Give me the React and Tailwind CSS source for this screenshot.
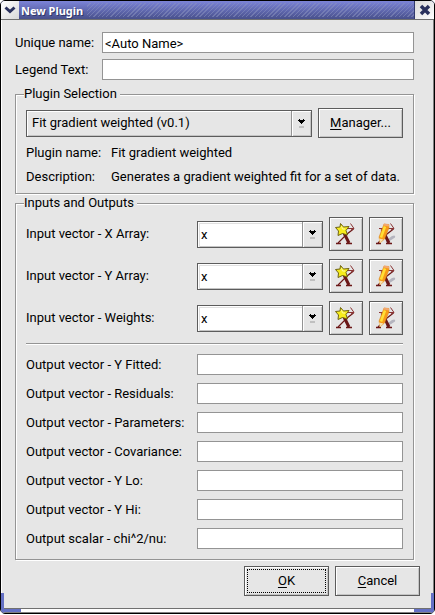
import React from "react";

const outputs = [
  "Output vector - Y Fitted:",
  "Output vector - Residuals:",
  "Output vector - Parameters:",
  "Output vector - Covariance:",
  "Output vector - Y Lo:",
  "Output vector - Y Hi:",
  "Output scalar - chi^2/nu:",
];
const inputs = [
  "Input vector - X Array:",
  "Input vector - Y Array:",
  "Input vector - Weights:",
];

const bevel =
  "border border-[#5c5c5c] bg-[#e6e6e6] shadow-[inset_1px_1px_0_#ffffff,inset_-1px_-1px_0_#c4c4c4]";
const field =
  "h-[21px] min-w-0 flex-1 border border-[#949494] bg-white px-0.5 pt-0.5 outline-none";

function Arrow() {
  return (
    <span className="pointer-events-none absolute inset-y-px right-px flex w-5 items-center justify-center border-l border-[#949494] bg-[#e6e6e6] shadow-[inset_1px_1px_0_#ffffff,inset_-1px_-1px_0_#c4c4c4]">
      <svg width="7" height="9" viewBox="0 0 7 9" shapeRendering="crispEdges">
        <path d="M1 0h1v1h3v-1h1v1h1v1h-1v1h-1v1h-1v1h-1v-1h-1v-1h-1v-1h-1v-1h1z" fill="#000" />
        <path d="M1 7h5v2h-5z" fill="#c0c0c0" />
      </svg>
    </span>
  );
}

function Combo({ id, value, label, editable }) {
  return (
    <div className="relative flex min-w-0 flex-1">
      <select
        id={id}
        aria-label={label}
        className={
          "h-[27px] w-full appearance-none border border-[#5c5c5c] pr-6 outline-none " +
          (editable
            ? "bg-white pt-0.5 pl-[3px] shadow-[inset_1px_1px_0_#ffffff,inset_2px_2px_0_#e0e0e0,inset_-1px_-1px_0_#c4c4c4]"
            : "bg-[#e6e6e6] pl-[5px] shadow-[inset_1px_1px_0_#ffffff,inset_-1px_-1px_0_#c4c4c4]")
        }
      >
        <option>{value}</option>
      </select>
      <Arrow />
    </div>
  );
}

function VectorX() {
  return (
    <g fill="none" stroke="#6b1717">
      <path d="M13 12L20 26" strokeWidth="3" />
      <path d="M24.5 12L18 17L9 26" strokeWidth="1.200" />
      <path d="M10 11.500H25M21.500 6.500L25 11.500L22 13" stroke="#8a3434" />
      <path d="M7 26.500H12M17 26.500H23" strokeWidth="1.300" />
    </g>
  );
}

function NewIcon() {
  return (
    <svg width="32" height="32" viewBox="1 1 32 32" aria-hidden="true">
      <VectorX />
      <path
        d="M11.500 6.500L14.500 10L20 9.500L17 13.500L18.500 18L13.500 16.500L9 18.500L9.500 14L6.500 10.500L11 10Z"
        fill="#f7ec1c"
        stroke="#6f6410"
        strokeLinejoin="round"
      />
      <path d="M12.500 9L13.500 12L16 12" fill="none" stroke="#fffba0" />
    </svg>
  );
}

function EditIcon() {
  return (
    <svg width="32" height="32" viewBox="1 1 32 32" aria-hidden="true">
      <path d="M17 23.500L23 19Q27 17.500 26 20.500Q23 23 17 25.500Z" fill="#b4b4be" />
      <VectorX />
      <path d="M15 7L20 7.500L20 11L15.500 22L11 26L10 20Z" fill="#f79a18" stroke="#d88a20" strokeWidth="0.500" />
      <path d="M16 9.500L12 20.500" stroke="#ffdf35" strokeWidth="2.500" />
      <path d="M15 6.500L20 7.500L20 9.500L14.500 8.500Z" fill="#f3a870" />
      <path d="M10 21.500L14.500 22.500L11 26Z" fill="#f7dfae" />
    </svg>
  );
}

function Group({ title, className, children }) {
  return (
    <fieldset
      className={
        "min-w-0 border border-[#949494] px-2.5 shadow-[inset_1px_1px_0_#ffffff,1px_1px_0_#ffffff] " +
        className
      }
    >
      <legend className="-ml-0.5 h-4 bg-[#e6e6e6] pr-[3px] leading-4">{title}</legend>
      {children}
    </fieldset>
  );
}

export default function App() {
  return (
    <main className="flex min-h-screen flex-col bg-white pb-px font-[Roboto,'Noto_Sans',sans-serif] text-[13px] leading-[18px] text-black">
      <div className="relative flex flex-1 flex-col overflow-hidden rounded-[5px] border border-black bg-[#e6e6e6]">
        <header className="flex h-[19px] border-b border-[#707070] bg-linear-to-b from-[#7c84d8] to-[#48508c]">
          <button aria-label="Window menu" className="flex w-[18px] items-center justify-center bg-linear-to-br from-white to-[#d8d8d8]">
            <svg width="12" height="8" viewBox="0 0 12 8">
              <path d="M1.500 1.500L6 5.500L10.500 1.500" fill="none" stroke="#29305c" strokeWidth="3" />
            </svg>
          </button>
          <h1 className="pr-1 pl-0.5 font-['Noto_Sans',sans-serif] text-[11px] leading-5 font-bold text-white [text-shadow:1px_1px_0_#303868]">New Plugin</h1>
          <div className="my-0.5 flex-1 bg-[repeating-linear-gradient(135deg,transparent_0_2px,#8c94c080_2px_3px)]" />
          <button aria-label="Close" className="flex w-5 items-center justify-center border-l border-[#30386c] bg-linear-to-br from-[#d8d8d8] to-white">
            <svg width="12" height="12" viewBox="0 0 12 12">
              <path d="M2 2L10 10M10 2L2 10" stroke="#29305c" strokeWidth="3.500" />
            </svg>
          </button>
        </header>

        <form className="flex flex-1 flex-col border-r border-l border-r-[#808080] border-l-white pt-3 pr-[19px] pl-[13px]" onSubmit={(e) => e.preventDefault()}>
          <div className="flex items-center">
            <label htmlFor="name" className="w-[87px]">Unique name:</label>
            <input id="name" className={field} defaultValue="<Auto Name>" />
          </div>
          <div className="mt-1.5 flex items-center">
            <label htmlFor="legend" className="w-[87px]">Legend Text:</label>
            <input id="legend" className={field} />
          </div>

          <Group title="Plugin Selection" className="mt-1.5 pb-[7px]">
            <div className="mt-1.5 flex items-center gap-1.5">
              <Combo id="plugin" label="Plugin" value="Fit gradient weighted (v0.1)" />
              <button type="button" className={"h-[30px] w-[85px] " + bevel}>
                <span className="underline underline-offset-2">M</span>anager...
              </button>
            </div>
            <dl className="mt-1.5 grid grid-cols-[85px_1fr] gap-y-1.5 whitespace-nowrap">
              <dt>Plugin name:</dt>
              <dd>Fit gradient weighted</dd>
              <dt>Description:</dt>
              <dd>Generates a gradient weighted fit for a set of data.</dd>
            </dl>
          </Group>

          <Group title="Inputs and Outputs" className="mt-px pb-2.5">
            <div className="mt-1.5 flex flex-col gap-2">
              {inputs.map((text, i) => (
                <div key={text} className="flex items-center gap-1.5">
                  <label htmlFor={"in" + i} className="w-[165px]">{text}</label>
                  <Combo id={"in" + i} value="x" editable />
                  <button type="button" aria-label="New vector" className={"h-[34px] w-[34px] " + bevel}>
                    <NewIcon />
                  </button>
                  <button type="button" aria-label="Edit vector" className={"h-[34px] w-[34px] " + bevel}>
                    <EditIcon />
                  </button>
                </div>
              ))}
            </div>
            <hr className="mt-2 h-0.5 border-t border-b border-t-[#949494] border-b-white" />
            <div className="mt-[9px] flex flex-col gap-2">
              {outputs.map((text, i) => (
                <div key={text} className="flex items-center">
                  <label htmlFor={"out" + i} className="w-[171px] whitespace-nowrap">{text}</label>
                  <input id={"out" + i} className={field} />
                </div>
              ))}
            </div>
          </Group>

          <div className="mt-1.5 -mr-1.5 flex justify-end gap-1.5">
            <button type="submit" className={"h-[30px] w-[85px] p-0.5 " + bevel}>
              <span className="flex h-full items-center justify-center border border-dotted border-black">
                <span className="underline underline-offset-2">O</span>K
              </span>
            </button>
            <button type="button" className={"h-[30px] w-[85px] " + bevel}>
              <span className="underline underline-offset-2">C</span>ancel
            </button>
          </div>
        </form>

        <footer className="flex h-[5px] justify-between border-t border-b border-t-[#707070] border-b-[#808080] bg-white">
          <span className="w-5 bg-[#6470c4]" />
          <span className="w-5 bg-[#6470c4]" />
        </footer>
        <span className="absolute bottom-0 left-0 h-5 w-[3px] bg-[#6470c4]" />
        <span className="absolute right-0 bottom-0 h-5 w-[3px] bg-[#6470c4]" />
      </div>
    </main>
  );
}
